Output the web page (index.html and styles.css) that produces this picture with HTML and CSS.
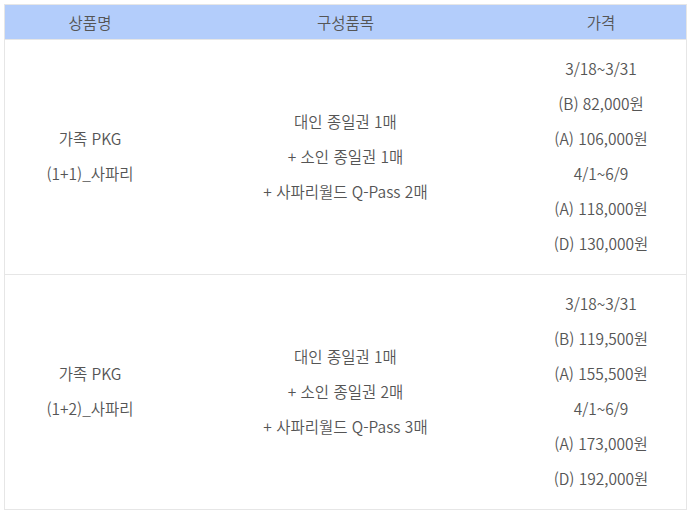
FILE: index.html
```html
<!DOCTYPE html>
<html lang="ko">
<head>
<meta charset="utf-8">
<link rel="stylesheet" href="styles.css">
</head>
<body>
<table class="pkg">
  <colgroup><col class="c1"><col class="c2"><col class="c3"></colgroup>
  <thead>
    <tr><th>상품명</th><th>구성품목</th><th>가격</th></tr>
  </thead>
  <tbody>
    <tr>
      <td><p>가족 PKG</p><p>(1+1)_사파리</p></td>
      <td><p>대인 종일권 1매</p><p>+ 소인 종일권 1매</p><p>+ 사파리월드 Q-Pass 2매</p></td>
      <td><p>3/18~3/31</p><p>(B) 82,000원</p><p>(A) 106,000원</p><p>4/1~6/9</p><p>(A) 118,000원</p><p>(D) 130,000원</p></td>
    </tr>
    <tr>
      <td><p>가족 PKG</p><p>(1+2)_사파리</p></td>
      <td><p>대인 종일권 1매</p><p>+ 소인 종일권 2매</p><p>+ 사파리월드 Q-Pass 3매</p></td>
      <td><p>3/18~3/31</p><p>(B) 119,500원</p><p>(A) 155,500원</p><p>4/1~6/9</p><p>(A) 173,000원</p><p>(D) 192,000원</p></td>
    </tr>
  </tbody>
</table>
</body>
</html>
```
FILE: styles.css
```css
html, body {
  margin: 0;
  padding: 0;
  background: #ffffff;
}
body {
  padding: 4px 0 0 4px;
  font-family: "Noto Sans CJK KR", "Noto Sans", sans-serif;
  font-weight: 350;
  color: #555555;
  font-size: 15.5px;
}
.pkg {
  width: 683px;
  border-collapse: collapse;
  border: 1px solid #e6e6e6;
  table-layout: fixed;
}
.c1 { width: 25%; }
.c2 { width: 50%; }
.c3 { width: 25%; }
.pkg th {
  background: #b3cdfb;
  height: 34px;
  padding: 0;
  font-weight: 350;
  font-size: 15.5px;
  color: #555555;
  text-align: center;
  vertical-align: middle;
}
.pkg td {
  padding: 11px 0 13px;
  text-align: center;
  vertical-align: middle;
  border-top: 1px solid #e6e6e6;
}
.pkg p {
  margin: 0;
  line-height: 35px;
}
```
